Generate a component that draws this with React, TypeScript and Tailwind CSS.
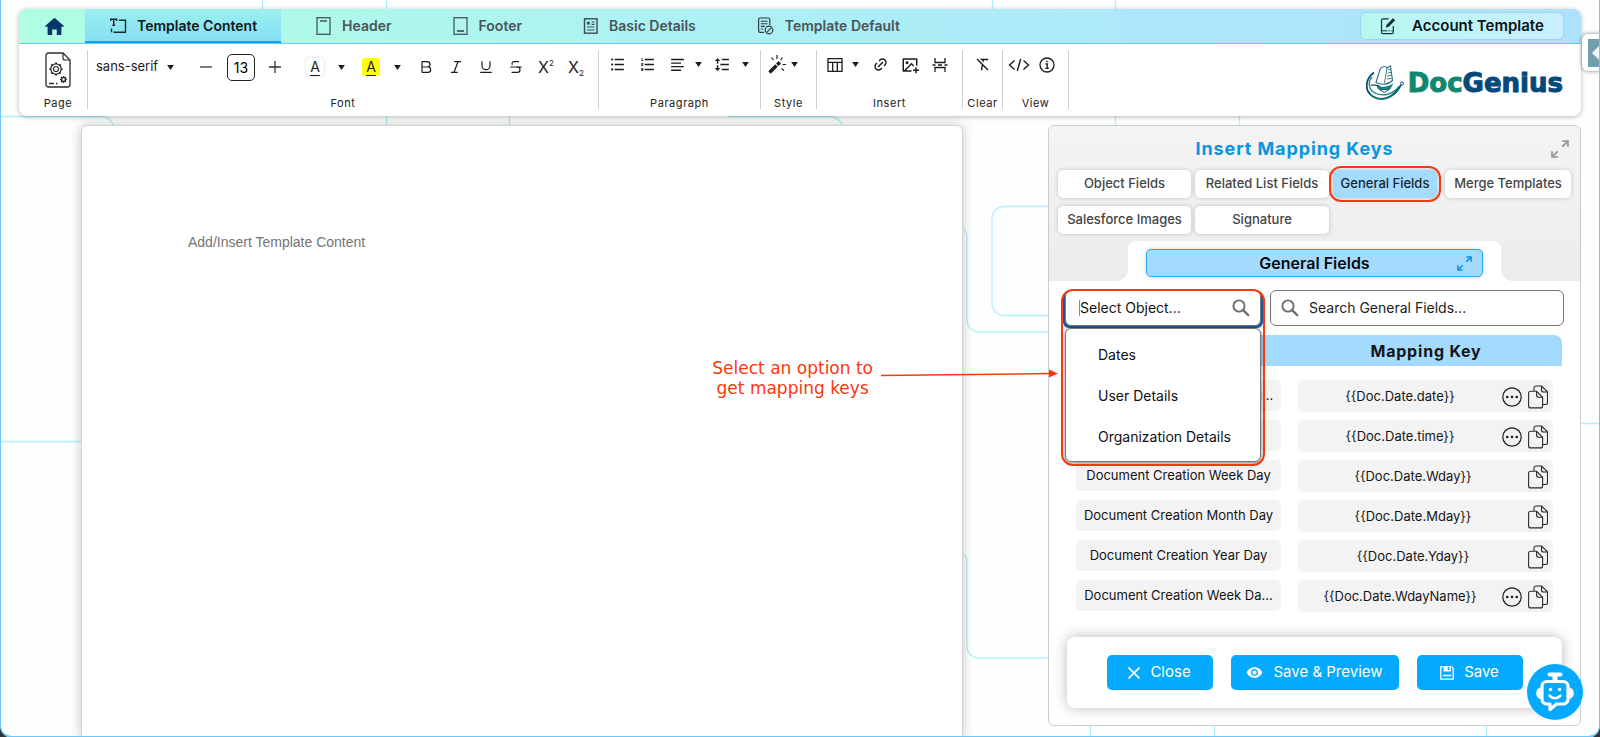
import React from "react";
import { Bold, Italic, Underline, Strikethrough } from "lucide-react";
import {
  RiListUnordered,
  RiListOrdered,
  RiAlignLeft,
  RiLineHeight,
  RiLinkM,
  RiImageAddLine,
  RiFormatClear,
} from "react-icons/ri";
import { MdVisibility } from "react-icons/md";

type Children = { children?: React.ReactNode };

function Caret() {
  return (
    <svg width="7" height="5" viewBox="0 0 8 6" aria-hidden="true">
      <path d="M0 0h8L4 6z" fill="#1c1c1c" />
    </svg>
  );
}

function HomeIcon() {
  return (
    <svg width="19" height="19" viewBox="0 0 19 19" aria-hidden="true">
      <path d="M9.5 0.8 0.3 8.8c-.4.4-.2 1 .4 1H2.600v7.300c0 .6.4 1 1 1h3.600v-5.500h4.600v5.500h3.600c.6 0 1-.4 1-1V9.800h1.900c.6 0 .8-.6.4-1z" fill="#06366a" />
    </svg>
  );
}

function TextAreaIcon() {
  return (
    <svg width="18" height="16" viewBox="0 0 18 16" fill="none" stroke="#1d2b2f" aria-hidden="true">
      <path d="M1.700 3V1.200h6V3M4.700 1.200v6M3.300 7.300h2.800" strokeWidth="1.400" />
      <path d="M10 2.200h6.500V14M2.500 10.500v3.800M4.500 14.300H17" strokeWidth="1.400" />
    </svg>
  );
}

function HeaderIcon() {
  return (
    <svg width="16" height="18" viewBox="0 0 16 18" fill="none" stroke="#48585c" aria-hidden="true">
      <rect x="1" y=".7" width="13" height="16.600" strokeWidth="1.300" />
      <path d="M4 4h7" strokeWidth="1.500" />
    </svg>
  );
}

function FooterIcon() {
  return (
    <svg width="16" height="18" viewBox="0 0 16 18" fill="none" stroke="#48585c" aria-hidden="true">
      <rect x="1" y=".7" width="13" height="16.600" strokeWidth="1.300" />
      <path d="M4 14h7" strokeWidth="1.800" />
    </svg>
  );
}

function DetailsIcon() {
  return (
    <svg width="16" height="16" viewBox="0 0 16 16" fill="none" stroke="#3d4c50" aria-hidden="true">
      <rect x="1.500" y=".8" width="12.500" height="14.400" strokeWidth="1.400" />
      <rect x="4.200" y="4" width="2.200" height="2.200" fill="#3d4c50" strokeWidth=".6" />
      <path d="M8.500 4h3M8.500 6.300h3M4 9h7.500M4 12h7.500" strokeWidth="1.200" />
    </svg>
  );
}

function DefaultIcon() {
  return (
    <svg width="18" height="18" viewBox="0 0 18 18" fill="none" stroke="#2e3d42" aria-hidden="true">
      <path d="M7 15.300H3.200a1.600 1.600 0 0 1-1.600-1.600V2.600A1.600 1.600 0 0 1 3.200 1h8a1.600 1.600 0 0 1 1.600 1.600V8" strokeWidth="1.200" />
      <path d="M3.800 4.200h6.800M3.800 6.800h6.800M3.800 9.400h4M3.800 12h2.500" strokeWidth="1.100" />
      <circle cx="12" cy="13" r="3.800" strokeWidth="1.200" />
      <path d="M9.500 15.600l5-5" strokeWidth="1.100" />
    </svg>
  );
}

function EditTemplateIcon() {
  return (
    <svg width="16" height="18" viewBox="0 0 16 18" fill="none" stroke="#16313a" aria-hidden="true">
      <path d="M8.500 1.800H3A1.500 1.500 0 0 0 1.500 3.300v11.900A1.500 1.500 0 0 0 3 16.700h8.800a1.500 1.500 0 0 0 1.500-1.500V9" strokeWidth="1.200" />
      <path d="M1.800 13.800h5.500M8.500 13.800h1.500M11.300 13.800h1.500" strokeWidth="1" />
      <path d="M6.300 10.300l.7-2.600L13 1.600l1.700 1.700-6 6.200z" fill="#16313a" strokeWidth=".8" />
    </svg>
  );
}

function PageSetupIcon() {
  const teeth = [0, 45, 90, 135, 180, 225, 270, 315];
  return (
    <svg width="26" height="36" viewBox="0 0 26 36" fill="none" stroke="#2d2d2d" aria-hidden="true">
      <path d="M18 1H3.500A2.500 2.500 0 0 0 1 3.500v29A2.500 2.500 0 0 0 3.500 35h19a2.500 2.500 0 0 0 2.500-2.500V8z" strokeWidth="1.300" />
      <path d="M18 1v5a2 2 0 0 0 2 2h5" strokeWidth="1.200" />
      <circle cx="11" cy="17" r="5.200" strokeWidth="1.200" />
      <circle cx="11" cy="17" r="2.500" strokeWidth="1.200" />
      {teeth.map((a) => (
        <path key={a} d="M10 11.300h2" strokeWidth="1.600" transform={`rotate(${a} 11 17)`} />
      ))}
      <circle cx="18.500" cy="27.500" r="2" strokeWidth="1.500" />
      {teeth.map((a) => (
        <path key={a} d="M18.500 25.200v-1.200" strokeWidth="1.200" transform={`rotate(${a} 18.500 27.500)`} />
      ))}
      <path d="M4 31.500h5M11 31.500h1.500" strokeWidth="1.300" />
    </svg>
  );
}

function WandIcon() {
  return (
    <svg width="20" height="20" viewBox="0 0 20 20" fill="none" stroke="#1c1c1c" aria-hidden="true">
      <path d="M1.500 17.500l7-7" strokeWidth="3.400" />
      <path d="M9.300 9.700l2.500-2.500" strokeWidth="3.400" />
      <path d="M9 0v4M3.500 2.500l2 2.500M14.500 2.500l-2 2.500M14.500 9.500H18M13.500 13.500l2.500 2" strokeWidth="1.200" />
    </svg>
  );
}

function TableIcon() {
  return (
    <svg width="16" height="16" viewBox="0 0 16 16" fill="none" stroke="#1c1c1c" strokeWidth="1.300" aria-hidden="true">
      <path d="M1 1.700h14v12.600H1zM1 5.300h14M5.700 5.300v9M10.300 5.300v9" />
    </svg>
  );
}

function CodeIcon() {
  return (
    <svg width="22" height="14" viewBox="0 0 22 14" fill="none" stroke="#1c1c1c" strokeWidth="1.400" aria-hidden="true">
      <path d="M6.500 2.500L1.500 7l5 4.500M15.500 2.500l5 4.500-5 4.500M12.700 1L9.300 13" />
    </svg>
  );
}

function PageBreakIcon() {
  return (
    <svg width="16" height="16" viewBox="0 0 16 16" fill="none" stroke="#1c1c1c" strokeWidth="1.300" aria-hidden="true">
      <path d="M3 1v4.500h10V1M3 15v-4.500h10V15M0.500 8h3M12.500 8h3M6 8h4" />
    </svg>
  );
}

function InfoIcon() {
  return (
    <svg width="16" height="16" viewBox="0 0 16 16" fill="none" stroke="#1c1c1c" aria-hidden="true">
      <circle cx="8" cy="8" r="7" strokeWidth="1.300" />
      <path d="M6.500 7h1.700v4M6.300 11.300h3.600" strokeWidth="1.300" />
      <circle cx="8" cy="4.600" r=".6" fill="#1c1c1c" strokeWidth=".6" />
    </svg>
  );
}

function ExpandIcon({ className }: { className: string }) {
  return (
    <svg className={className} viewBox="0 0 20 20" fill="none" stroke="currentColor" strokeWidth="2" aria-hidden="true">
      <path d="M12.500 1.200h6.300v6.300M18.500 1.500L12.500 7.500M7.500 18.800H1.200v-6.300M1.500 18.500l6-6" />
    </svg>
  );
}

function SearchIcon() {
  return (
    <svg width="18" height="18" viewBox="0 0 18 18" fill="none" stroke="#6f6f6f" aria-hidden="true">
      <circle cx="7" cy="7" r="5.600" strokeWidth="1.900" />
      <path d="M11.200 11.200l5 5" strokeWidth="2.400" strokeLinecap="round" />
    </svg>
  );
}

function MoreIcon() {
  return (
    <svg width="20" height="20" viewBox="0 0 20 20" aria-hidden="true">
      <circle cx="10" cy="10" r="9.200" fill="none" stroke="#1d1d1d" strokeWidth="1.200" />
      <circle cx="5.200" cy="10" r="1.300" fill="#1d1d1d" />
      <circle cx="10" cy="10" r="1.300" fill="#1d1d1d" />
      <circle cx="14.800" cy="10" r="1.300" fill="#1d1d1d" />
    </svg>
  );
}

function CopyIcon() {
  return (
    <svg width="20" height="24" viewBox="0 0 20 24" fill="none" stroke="#2a2a2a" strokeWidth="1.100" aria-hidden="true">
      <path d="M14.500 19.500h3a2 2 0 0 0 2-2V6.800L13.500 1H8a2 2 0 0 0-2 2v3" />
      <path d="M13.500 1v4a2 2 0 0 0 2 2h4" />
      <path d="M8.600 6.300H2.600a2 2 0 0 0-2 2v12.600a2 2 0 0 0 2 2h10a2 2 0 0 0 2-2v-8.600z" />
      <path d="M8.600 6.300v4a2 2 0 0 0 2 2h4" />
    </svg>
  );
}

function FloppyIcon() {
  return (
    <svg width="14" height="14" viewBox="0 0 14 14" fill="none" stroke="#fff" strokeWidth="1.300" aria-hidden="true">
      <path d="M3 .8H.8v12.400h12.400V2.500L11.500.8M2.800 9.500h8.400" />
      <path d="M3.500 0h7.500v5.500H3.500z" fill="#fff" stroke="none" />
      <path d="M8.500 1V4" stroke="#05aaff" strokeWidth="1.600" />
    </svg>
  );
}

function BotIcon() {
  return (
    <svg width="42" height="42" viewBox="0 0 42 42" fill="none" stroke="#fff" strokeWidth="3.200" strokeLinejoin="round" aria-hidden="true">
      <path d="M15.500 3.500h11" strokeWidth="4" strokeLinecap="round" />
      <path d="M21 4v6" strokeWidth="5" />
      <path d="M13 10.500h16a5 5 0 0 1 5 5V28a5 5 0 0 1-5 5h-6.500L16 38.500V33h-3a5 5 0 0 1-5-5V15.500a5 5 0 0 1 5-5z" />
      <path d="M6 17.500c-4 1.500-4 8 0 9.500zM36 17.500c4 1.500 4 8 0 9.500z" fill="#fff" strokeWidth="1.500" />
      <path d="M15.500 24.500c2.500 3.500 8.500 3.500 11 0" strokeWidth="2.400" strokeLinecap="round" />
      <circle cx="16.500" cy="18.500" r="1.700" fill="#fff" stroke="none" />
      <circle cx="25.500" cy="18.500" r="1.700" fill="#fff" stroke="none" />
    </svg>
  );
}

function LogoMark() {
  return (
    <svg width="38" height="36" viewBox="0 0 38 36" fill="none" aria-hidden="true">
      <path d="M8 7.500C-1 14-2 26 7 31.500c8 5 20 2.500 28-11.500" stroke="#0c4a78" strokeWidth="1.800" />
      <path d="M6 12C1 18 3 25.500 10 28.500c8 3.200 17 .5 23-7" stroke="#12876f" strokeWidth="1.300" />
      <path d="M5 30.500c8 6 20 4.500 28-6" stroke="#12876f" strokeWidth="1.100" />
      <path d="M10 17.500L14 4.500c1-3 6-4 7-1.500l3.500-2 2 14.500c-4 4-11 5-16.500 2z" fill="#fff" stroke="#2c6f7c" strokeWidth="1.100" />
      <path d="M21 3l-2.500 15M22 5l3-.6M21.600 8l3.600-.6M21.200 11l4.300-.6M20.800 14l5-.6" stroke="#2c6f7c" strokeWidth=".9" />
      <path d="M10 19.500c5 3.500 12 3 17.500-1.500l-3 6-7 3.500-5.500-3.500z" fill="#12876f" />
      <path d="M14 24.500h9l-5 3z" fill="#fff" stroke="#0c4a78" strokeWidth=".8" />
      <path d="M5 20.500c3-2 6 1 9 .5" stroke="#0c4a78" strokeWidth="1.200" />
      <circle cx="36" cy="18.500" r="1.500" stroke="#0c4a78" strokeWidth="1" />
    </svg>
  );
}

function Backdrop() {
  return (
    <svg className="pointer-events-none absolute -left-px top-0" width="1600" height="737" viewBox="0 0 1600 737" fill="none" stroke="#b3effa" strokeWidth="1.300" aria-hidden="true">
      <path d="M262.500 0v20M386.500 0v130M992.500 0v20M1115.500 0v130M509.500 100v30M1239.500 100v30" />
      <path d="M0 116.500h100c8 0 12 4 13.500 10M728 116.500h100c8 0 13 4 15 10" />
      <path d="M0 441.500h90M1570 423.500h30" />
      <path d="M1060 206.500h-56a12 12 0 0 0-12 12v85a12 12 0 0 0 12 12h56" />
      <path d="M960 227c5 2 7 5 7 10v83a12 12 0 0 0 12 12h80" />
      <path d="M960 552c5 2 7 5 7 10v84a12 12 0 0 0 12 12h80" />
      <path d="M1090.500 720v20M1214.500 720v20M1486.500 720v20" />
    </svg>
  );
}

function Tab({ icon, label, active }: { icon: React.ReactNode; label: string; active?: boolean }) {
  return (
    <button
      type="button"
      className={
        active
          ? "flex h-full items-center gap-2.5 border-b-2 border-[#12a4f7] bg-linear-to-b from-[#9af0ee] to-[#86dff4] px-6 pt-0.5 text-sm font-semibold text-[#101a1c]"
          : "flex h-full items-center gap-2.5 px-[26px] text-sm font-semibold text-[#4a5558]"
      }
    >
      {icon}
      {label}
    </button>
  );
}

function Group({ label, className, children }: Children & { label: string; className: string }) {
  return (
    <div role="group" aria-label={label} className={`flex h-[59px] shrink-0 flex-col border-r border-[#cfcfcf] ${className}`}>
      {children}
      <span className="mt-auto text-center text-[11px] leading-3 tracking-wider text-[#222]">{label}</span>
    </div>
  );
}

function Tool({ label, className = "w-[30px]", children }: Children & { label: string; className?: string }) {
  return (
    <button type="button" aria-label={label} className={`flex shrink-0 items-center justify-center text-[#1c1c1c] ${className}`}>
      {children}
    </button>
  );
}

function Toolbar() {
  return (
    <div className="flex h-[72px] items-start pt-1.5">
      <Group label="Page" className="w-[69px] pl-2.5">
        <Tool label="Page setup" className="mt-0.5">
          <PageSetupIcon />
        </Tool>
      </Group>
      <Group label="Font" className="w-[511px]">
        <div className="flex h-[34px] items-center gap-1 pl-2">
          <div className="flex items-center">
            <span className="flex w-[88px] items-center gap-1.5">
              <select aria-label="Font family" className="w-[65px] appearance-none bg-transparent text-[13px] text-[#1c1c1c]">
                <option>sans-serif</option>
              </select>
              <Caret />
            </span>
            <Tool label="Decrease size" className="w-[43px]">
              <svg width="12" height="12" viewBox="0 0 12 12" stroke="#333" strokeWidth="1.300"><path d="M0 6h12" /></svg>
            </Tool>
            <input aria-label="Font size" defaultValue="13" className="h-[27px] w-7 rounded-[5px] border border-[#222] text-center text-sm text-black" />
            <Tool label="Increase size" className="w-10">
              <svg width="12" height="12" viewBox="0 0 12 12" stroke="#333" strokeWidth="1.300"><path d="M0 6h12M6 0v12" /></svg>
            </Tool>
          </div>
          <div className="flex items-center">
            <Tool label="Text colour" className="w-8">
              <span className="h-[18px] w-[18px] rounded-[3px] text-center text-sm leading-[18px] underline underline-offset-3 shadow-[0_0_2px_#bbb]">A</span>
            </Tool>
            <Tool label="Text colours" className="w-5"><Caret /></Tool>
          </div>
          <div className="flex items-center">
            <Tool label="Highlight" className="w-8">
              <span className="h-[18px] w-[18px] rounded-[3px] bg-[#ffff00] text-center text-sm leading-[18px] underline underline-offset-3">A</span>
            </Tool>
            <Tool label="Highlight colours" className="w-5"><Caret /></Tool>
          </div>
          <div className="flex items-center">
            <Tool label="Bold"><Bold size={16} strokeWidth={1.8} /></Tool>
            <Tool label="Italic"><Italic size={16} strokeWidth={1.8} /></Tool>
            <Tool label="Underline"><Underline size={16} strokeWidth={1.8} /></Tool>
            <Tool label="Strikethrough"><Strikethrough size={16} strokeWidth={1.8} /></Tool>
            <Tool label="Superscript"><span className="text-base leading-5">X</span><span className="self-start text-[8px] leading-3">2</span></Tool>
            <Tool label="Subscript"><span className="text-base leading-5">X</span><span className="self-end text-[8px] leading-2">2</span></Tool>
          </div>
        </div>
      </Group>
      <Group label="Paragraph" className="w-[162px]">
        <div className="flex h-[29px] items-center pl-[3px]">
          <Tool label="Bullet list"><RiListUnordered size={17} /></Tool>
          <Tool label="Numbered list"><RiListOrdered size={17} /></Tool>
          <Tool label="Align"><RiAlignLeft size={17} /></Tool>
          <Tool label="Alignments" className="w-3"><Caret /></Tool>
          <Tool label="Line height" className="w-9"><RiLineHeight size={17} /></Tool>
          <Tool label="Line heights" className="w-2.5"><Caret /></Tool>
        </div>
      </Group>
      <Group label="Style" className="w-14">
        <div className="flex h-[29px] items-center pl-[7px]">
          <Tool label="Style" className="w-5"><WandIcon /></Tool>
          <Tool label="Styles" className="w-3"><Caret /></Tool>
        </div>
      </Group>
      <Group label="Insert" className="w-[146px]">
        <div className="flex h-[29px] items-center pl-[3px]">
          <Tool label="Table"><TableIcon /></Tool>
          <Tool label="Table options" className="mr-[5px] w-2.5"><Caret /></Tool>
          <Tool label="Link"><RiLinkM size={17} /></Tool>
          <Tool label="Image"><RiImageAddLine size={18} /></Tool>
          <Tool label="Page break"><PageBreakIcon /></Tool>
        </div>
      </Group>
      <Group label="Clear" className="w-10">
        <div className="flex h-[29px] items-center justify-center">
          <Tool label="Clear format"><RiFormatClear size={17} /></Tool>
        </div>
      </Group>
      <Group label="View" className="w-[66px]">
        <div className="flex h-[29px] items-center pl-px">
          <Tool label="Source"><CodeIcon /></Tool>
          <Tool label="Information" className="w-[26px]"><InfoIcon /></Tool>
        </div>
      </Group>
      <div className="ml-auto flex items-center gap-1 self-center pr-[18px]">
        <LogoMark />
        <span className="font-['DejaVu_Sans',sans-serif] text-[26px] leading-8 font-bold text-[#12876f] [-webkit-text-stroke:1px_currentColor]">
          Doc<span className="text-[#04497a]">Genius</span>
        </span>
      </div>
    </div>
  );
}

function TopBar() {
  return (
    <header className="relative mx-[19px] mt-[9px] rounded-lg bg-white shadow-[0_1px_5px_rgba(0,0,0,0.28)]">
      <div className="flex h-[35px] items-center justify-between rounded-t-lg border-b border-[#66ccf8] bg-linear-to-r from-[#affee4] via-[#aceff6] to-[#aee0ff] pr-[17px]">
        <nav className="flex h-full items-center gap-[9px]">
          <a href="#home" aria-label="Home" className="-mr-[9px] flex w-[66px] justify-center pl-1"><HomeIcon /></a>
          <Tab active icon={<TextAreaIcon />} label="Template Content" />
          <Tab icon={<HeaderIcon />} label="Header" />
          <Tab icon={<FooterIcon />} label="Footer" />
          <Tab icon={<DetailsIcon />} label="Basic Details" />
          <Tab icon={<DefaultIcon />} label="Template Default" />
        </nav>
        <button type="button" className="flex h-7 w-[204px] items-center justify-center gap-4 rounded-md border border-[#9fd3ec] bg-linear-to-r from-[#b6f8f0] to-[#c9efff] text-[15px] font-semibold text-[#0c1416]">
          <EditTemplateIcon />
          Account Template
        </button>
      </div>
      <Toolbar />
    </header>
  );
}

const fieldTabs = ["Object Fields", "Related List Fields", "General Fields", "Merge Templates", "Salesforce Images", "Signature"];

const rows = [
  { name: "Document Creation Date & Ti...", key: "{{Doc.Date.date}}", more: true },
  { name: "Document Creation Time", key: "{{Doc.Date.time}}", more: true },
  { name: "Document Creation Week Day", key: "{{Doc.Date.Wday}}", more: false },
  { name: "Document Creation Month Day", key: "{{Doc.Date.Mday}}", more: false },
  { name: "Document Creation Year Day", key: "{{Doc.Date.Yday}}", more: false },
  { name: "Document Creation Week Da...", key: "{{Doc.Date.WdayName}}", more: true },
];

function PanelHead() {
  return (
    <div className="rounded-t-md bg-linear-to-b from-[#f4f4f4] to-[#ececec] px-[9px]">
      <div className="relative flex h-11 items-center justify-center pt-0.5 pr-10">
        <h2 className="text-lg font-bold tracking-wider text-[#0b95e0]">Insert Mapping Keys</h2>
        <button type="button" aria-label="Expand panel" className="absolute top-3.5 right-0.5 text-[#999]">
          <ExpandIcon className="h-[18px] w-[18px]" />
        </button>
      </div>
      <div className="grid grid-cols-[133px_134px_108px_126px] gap-x-1 gap-y-2">
        {fieldTabs.map((t) =>
          t === "General Fields" ? (
            <span key={t} className="relative mr-1">
              <button type="button" className="h-7 w-full rounded-[5px] bg-[#a5daff] text-[13px] font-medium text-[#16262e] shadow-[0_0_4px_rgba(0,0,0,0.2)]">{t}</button>
              <span className="pointer-events-none absolute -inset-1 rounded-xl border-2 border-[#f8380f]" />
            </span>
          ) : (
            <button key={t} type="button" className="h-7 rounded-[5px] bg-white text-[13px] font-medium text-[#444] shadow-[0_0_4px_rgba(0,0,0,0.2)]">{t}</button>
          ),
        )}
      </div>
      <div className="relative mx-[70px] mt-[7px] h-10 rounded-t-lg bg-white px-[18px] pt-2">
        <span className="absolute bottom-0 right-full h-3 w-3 rounded-br-xl shadow-[4px_4px_0_2px_#fff] [clip-path:inset(0)]" />
        <span className="absolute bottom-0 left-full h-3 w-3 rounded-bl-xl shadow-[-4px_4px_0_2px_#fff] [clip-path:inset(0)]" />
        <div className="relative flex h-7 items-center justify-center rounded-[5px] border border-[#28aaf5] bg-[#a5daff] shadow-[0_0_5px_rgba(0,0,0,0.18)]">
          <h3 className="text-base font-semibold text-[#0a0a0a]">General Fields</h3>
          <button type="button" aria-label="Expand fields" className="absolute right-2.5 text-[#0b95e0]">
            <ExpandIcon className="h-[15px] w-[15px]" />
          </button>
        </div>
      </div>
    </div>
  );
}

function ObjectSelect() {
  return (
    <div className="relative w-[196px]">
      <label className="flex h-9 items-center rounded-md border border-[#777] bg-white pr-2.5 pl-[13px] shadow-[2px_2px_0_#15599f,-2px_2px_0_#15599f]">
        <span className="h-4 w-px shrink-0 bg-[#888]" />
        <input aria-label="Object" placeholder="Select Object..." className="w-0 grow text-sm outline-none placeholder:text-[#111]" />
        <SearchIcon />
      </label>
      <ul role="listbox" aria-label="Objects" className="absolute top-[38px] left-0 z-10 w-full rounded-md border border-[#777] bg-white pt-[5px] pb-1 text-sm text-[#111] shadow-[0_1px_4px_rgba(0,0,0,0.5)]">
        {["Dates", "User Details", "Organization Details"].map((o) => (
          <li key={o} role="option" aria-selected="false" className="flex h-[41px] items-center pl-8">{o}</li>
        ))}
      </ul>
      <span className="pointer-events-none absolute -top-px -left-1 z-20 h-[177px] w-[204px] rounded-xl border-2 border-[#f8380f]" />
    </div>
  );
}

function KeyTable() {
  return (
    <table className="w-full table-fixed border-separate border-spacing-0 text-[13px] text-[#151515]">
      <thead>
        <tr className="h-[31px] text-base tracking-wider">
          <th className="w-[223px] rounded-tl-lg bg-[#a5daff] font-bold">Field</th>
          <th className="rounded-tr-lg bg-[#a5daff] font-bold">Mapping Key</th>
        </tr>
      </thead>
      <tbody className="[&_tr:first-child_td]:pt-3.5">
        {rows.map((r) => (
          <tr key={r.key} className="align-top">
            <td className="pb-2 pl-[9px]">
              <div className="mr-[9px] h-[31px] rounded-md bg-[#f3f3f3] text-center leading-[31px] whitespace-nowrap">{r.name}</div>
            </td>
            <td className="pr-[9px] pb-2 pl-2">
              <div className="flex h-8 items-center rounded-md bg-[#f3f3f3] pt-px pr-[5px]">
                <span className="grow text-center">{r.key}</span>
                {r.more && (
                  <button type="button" aria-label={`More formats for ${r.key}`} className="mr-1.5"><MoreIcon /></button>
                )}
                <button type="button" aria-label={`Copy ${r.key}`}><CopyIcon /></button>
              </div>
            </td>
          </tr>
        ))}
      </tbody>
    </table>
  );
}

const primary = "flex h-[35px] items-center justify-center gap-2.5 rounded-[5px] bg-[#05aaff] text-[15px] text-white";

function MappingPanel() {
  return (
    <aside className="relative mb-[10px] w-[533px] shrink-0 rounded-md border border-[#cbcbcb] bg-white">
      <PanelHead />
      <div className="px-[18px] pt-[9px] pb-[17px]">
        <div className="-mx-[2px] flex gap-[9px]">
          <ObjectSelect />
          <label className="flex h-9 grow items-center gap-2.5 rounded-md border border-[#777] px-2.5">
            <SearchIcon />
            <input aria-label="Search fields" placeholder="Search General Fields..." className="w-0 grow text-sm outline-none placeholder:text-[#222]" />
          </label>
        </div>
        <div className="mt-[9px]">
          <KeyTable />
        </div>
        <div className="mt-[17px] flex h-[71px] items-center justify-center gap-[18px] rounded-lg bg-white shadow-[0_0_14px_rgba(0,0,0,0.28)]">
          <button type="button" className={`${primary} w-[106px]`}>
            <svg width="12" height="12" viewBox="0 0 12 12" stroke="#fff" strokeWidth="1.600" aria-hidden="true"><path d="M.5.5l11 11M11.500.5l-11 11" /></svg>
            Close
          </button>
          <button type="button" className={`${primary} w-[168px]`}>
            <MdVisibility size={17} />
            Save &amp; Preview
          </button>
          <button type="button" className={`${primary} w-[106px]`}>
            <FloppyIcon />
            Save
          </button>
        </div>
      </div>
      <div className="pointer-events-none absolute top-[232px] right-full -mr-[9px] flex items-start gap-2">
        <p className="text-center font-['DejaVu_Sans',sans-serif] text-[17px] leading-5 whitespace-nowrap text-[#f8380f]">
          Select an option to
          <br />
          get mapping keys
        </p>
        <svg className="mt-2.5" width="177" height="12" viewBox="0 0 177 12" aria-hidden="true">
          <path d="M0 7.500l170-2" stroke="#f8380f" strokeWidth="1.500" />
          <path d="M168 1.500l9 4-9 4z" fill="#f8380f" />
        </svg>
      </div>
      <button type="button" aria-label="Chat assistant" className="absolute -right-[3px] bottom-[5px] flex h-14 w-14 items-center justify-center rounded-full bg-[#05aaff]">
        <BotIcon />
      </button>
    </aside>
  );
}

export default function App() {
  return (
    <div className="min-h-screen bg-[#333] font-[Inter,sans-serif]">
      <div className="relative flex min-h-screen flex-col overflow-hidden rounded-b-xl border-x border-b-2 border-[#6cc8fa] bg-[#fdfefe]">
        <div className="-mx-px flex grow flex-col">
          <Backdrop />
          <TopBar />
          <button type="button" aria-label="Open sidebar" className="absolute -right-[3px] top-[34px] flex h-[37px] w-5 items-center rounded-l-md bg-white pl-1.5 shadow-[0_0_4px_rgba(0,0,0,0.5)]">
            <svg width="12" height="28" viewBox="0 0 12 28" aria-hidden="true">
              <path d="M0 0h12v28H0z" fill="#719dac" />
              <path d="M12 6L4 14l8 8z" fill="#f3f6f8" />
            </svg>
          </button>
          <main className="relative flex grow gap-[85px] pt-[9px] pr-[19px] pl-[81px]">
            <section className="-mb-1 grow rounded-t-md border border-[#d4d4d4] bg-white px-[106px] pt-[104px] shadow-[0_0_12px_rgba(0,0,0,0.22)]">
              <div role="textbox" aria-label="Template content" className="font-['Liberation_Sans',sans-serif] text-sm leading-6 text-[#757575]">
                Add/Insert Template Content
              </div>
            </section>
            <div><MappingPanel /></div>
          </main>
        </div>
      </div>
    </div>
  );
}
